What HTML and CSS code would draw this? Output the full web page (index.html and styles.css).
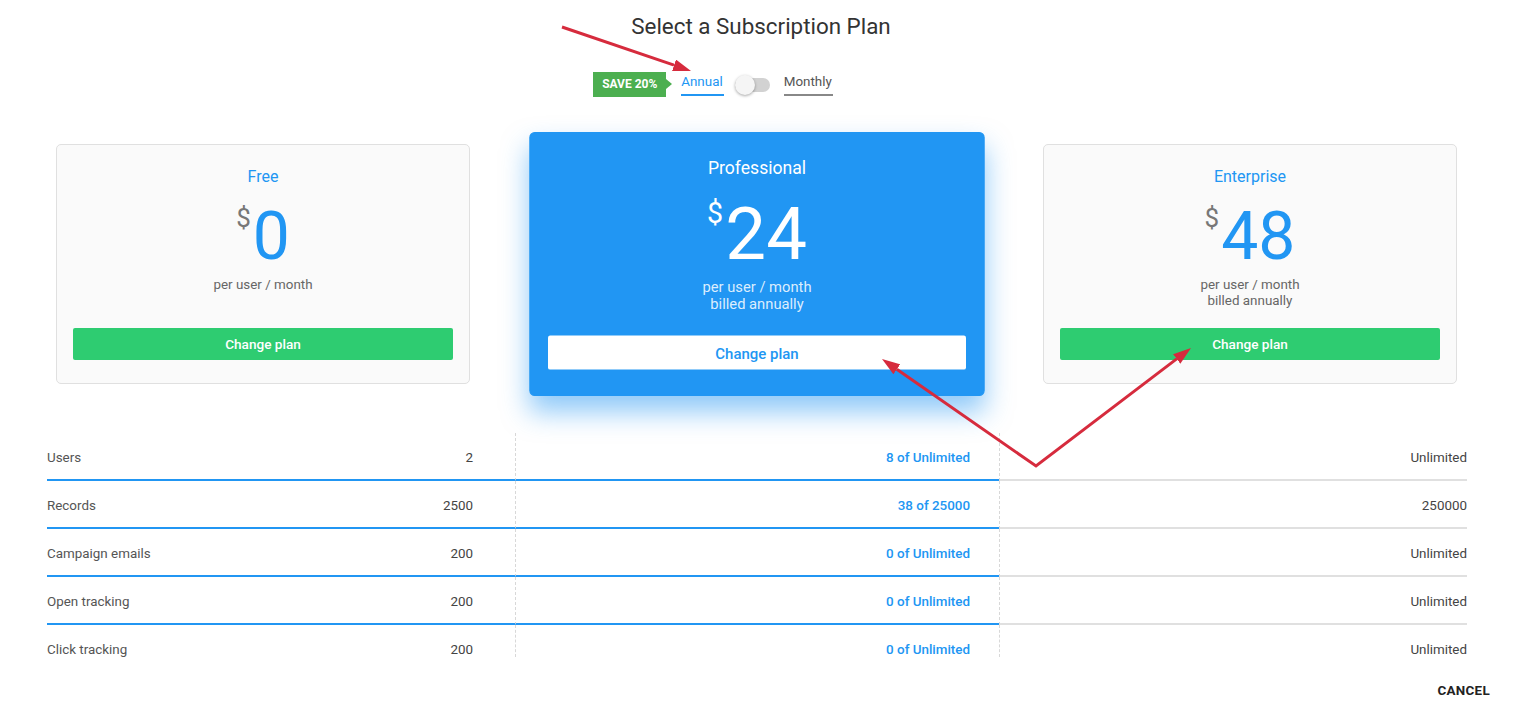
FILE: index.html
```html
<!DOCTYPE html>
<html lang="en">
<head>
<meta charset="utf-8">
<title>Select a Subscription Plan</title>
<link rel="stylesheet" href="styles.css">
</head>
<body>
<div class="page">
  <h1 class="title">Select a Subscription Plan</h1>

  <div class="billing">
    <div class="toggle-group">
      <span class="save-badge">SAVE 20%</span>
      <span class="period-opt active">Annual</span>
      <span class="switch"><span class="knob"></span></span>
      <span class="period-opt">Monthly</span>
    </div>
  </div>

  <div class="plans">
    <div class="card">
      <div class="plan-name">Free</div>
      <div class="price"><span class="cur">$</span><span class="amt">0</span></div>
      <div class="per">per user / month</div>
      <button class="btn">Change plan</button>
    </div>
    <div class="card featured">
      <div class="plan-name">Professional</div>
      <div class="price"><span class="cur">$</span><span class="amt">24</span></div>
      <div class="per">per user / month<br>billed annually</div>
      <button class="btn">Change plan</button>
    </div>
    <div class="card">
      <div class="plan-name">Enterprise</div>
      <div class="price"><span class="cur">$</span><span class="amt">48</span></div>
      <div class="per">per user / month<br>billed annually</div>
      <button class="btn">Change plan</button>
    </div>
  </div>

  <div class="limits">
    <div class="row">
      <div class="cell c1"><span class="label">Users</span><span class="val">2</span></div>
      <div class="cell c2">8 of Unlimited</div>
      <div class="cell c3">Unlimited</div>
    </div>
    <div class="row">
      <div class="cell c1"><span class="label">Records</span><span class="val">2500</span></div>
      <div class="cell c2">38 of 25000</div>
      <div class="cell c3">250000</div>
    </div>
    <div class="row">
      <div class="cell c1"><span class="label">Campaign emails</span><span class="val">200</span></div>
      <div class="cell c2">0 of Unlimited</div>
      <div class="cell c3">Unlimited</div>
    </div>
    <div class="row">
      <div class="cell c1"><span class="label">Open tracking</span><span class="val">200</span></div>
      <div class="cell c2">0 of Unlimited</div>
      <div class="cell c3">Unlimited</div>
    </div>
    <div class="row last">
      <div class="cell c1"><span class="label">Click tracking</span><span class="val">200</span></div>
      <div class="cell c2">0 of Unlimited</div>
      <div class="cell c3">Unlimited</div>
    </div>
  </div>

  <div class="footer">
    <button class="cancel">CANCEL</button>
  </div>

  <svg class="annotations" width="1516" height="708" viewBox="0 0 1516 708" xmlns="http://www.w3.org/2000/svg">
    <defs>
      <marker id="ah" viewBox="0 0 18 12" markerWidth="18" markerHeight="12" refX="0" refY="6" orient="auto-start-reverse" markerUnits="userSpaceOnUse">
        <path d="M0,0 L18,6 L0,12 z" fill="#d62b3d"/>
      </marker>
    </defs>
    <line x1="562" y1="27" x2="674" y2="65.2" stroke="#d62b3d" stroke-width="3" marker-end="url(#ah)"/>
    <polyline points="896.8,369.3 1036,466 1176.7,358.9" fill="none" stroke="#d62b3d" stroke-width="3" stroke-linejoin="miter" marker-start="url(#ah)" marker-end="url(#ah)"/>
  </svg>
</div>
</body>
</html>
```

FILE: styles.css
```css
* { box-sizing: border-box; }

html, body {
  margin: 0;
  padding: 0;
  background: #ffffff;
}

body {
  font-family: Roboto, "Liberation Sans", Arial, sans-serif;
  color: #444;
}

.page {
  position: relative;
  width: 1516px;
  height: 708px;
  overflow: hidden;
}

.title {
  margin: 0;
  padding: 13px 0 0 6px;
  font-size: 22.4px;
  line-height: 26px;
  font-weight: 400;
  color: #333;
  text-align: center;
}

.billing {
  display: flex;
  justify-content: center;
  margin-top: 33px;
  padding-right: 2px;
}

.toggle-group {
  position: relative;
  display: flex;
  align-items: center;
  height: 25px;
}

.save-badge {
  position: absolute;
  right: 100%;
  margin-right: 15px;
  top: 0;
  height: 25px;
  width: 73px;
  background: #4caf50;
  color: #fff;
  font-size: 12px;
  font-weight: 700;
  line-height: 25px;
  text-align: center;
  white-space: nowrap;
}

.save-badge::after {
  content: "";
  position: absolute;
  left: 100%;
  top: 7px;
  border-top: 5.5px solid transparent;
  border-bottom: 5.5px solid transparent;
  border-left: 6px solid #4caf50;
}

.period-opt {
  font-size: 13.4px;
  line-height: 15px;
  padding: 0 1px 5px 0;
  margin-top: 1px;
  color: #555;
  border-bottom: 2px solid #888;
}

.period-opt.active {
  color: #2196f3;
  border-bottom-color: #2196f3;
}

.switch {
  position: relative;
  width: 35px;
  height: 14px;
  margin: 0 14px 0 11px;
  border-radius: 7px;
  background: #d2d2d2;
}

.knob {
  position: absolute;
  left: 0;
  top: -3px;
  width: 20px;
  height: 20px;
  border-radius: 50%;
  background: #f5f5f5;
  box-shadow: 0 1px 3px rgba(0, 0, 0, 0.35);
}

.plans {
  display: flex;
  justify-content: space-between;
  padding: 0 59px 0 56px;
  margin-top: 47px;
}

.card {
  position: relative;
  width: 414px;
  height: 240px;
  display: flex;
  flex-direction: column;
  align-items: stretch;
  padding: 22px 16px 23px;
  background: #fafafa;
  border: 1px solid #e0e0e0;
  border-radius: 5px;
  text-align: center;
}

.plan-name {
  font-size: 16px;
  line-height: 20px;
  color: #2196f3;
}

.price {
  margin-top: 14px;
  font-size: 66px;
  line-height: 72px;
  height: 72px;
  color: #2196f3;
}

.cur {
  display: inline-block;
  vertical-align: top;
  margin-top: 4px;
  margin-right: 2px;
  font-size: 26px;
  line-height: 26px;
  color: #777;
}

.per {
  margin-top: 4px;
  font-size: 13.4px;
  line-height: 16px;
  color: #666;
}

.btn {
  margin-top: auto;
  height: 32px;
  width: 100%;
  border: 0;
  border-radius: 2px;
  background: #2ecc71;
  color: #fff;
  font-family: inherit;
  font-size: 13.6px;
  font-weight: 500;
  cursor: pointer;
}

.card.featured {
  z-index: 1;
  background: #2196f3;
  border-color: #2196f3;
  transform: scale(1.1);
  box-shadow: 0 14px 24px rgba(33, 150, 243, 0.5);
}

.card.featured .plan-name,
.card.featured .price,
.card.featured .cur {
  color: #fff;
}

.card.featured .per {
  color: rgba(255, 255, 255, 0.85);
}

.card.featured .btn {
  background: #fff;
  color: #2196f3;
  height: 31px;
}

.limits {
  margin: 49px 0 0 47px;
  width: 1420px;
}

.row {
  display: grid;
  grid-template-columns: 468px 484px 1fr;
}

.cell {
  font-size: 13.4px;
  line-height: 18px;
  padding: 16px 0 12px;
  border-bottom: 2px solid #2196f3;
  color: #444;
  text-align: right;
}

.row.last .cell {
  border-bottom: 0;
  padding-bottom: 0;
  height: 32px;
}

.c1 {
  display: flex;
  justify-content: space-between;
  padding-right: 42px;
  text-align: left;
}

.label {
  color: #555;
}

.c2 {
  border-left: 1px dashed #d8d8d8;
  padding-right: 29px;
  color: #2196f3;
  font-weight: 500;
}

.c3 {
  border-left: 1px dashed #d8d8d8;
  border-bottom-color: #e0e0e0 !important;
}

.footer {
  display: flex;
  justify-content: flex-end;
  padding-right: 26px;
  margin-top: 26px;
}

.cancel {
  border: 0;
  background: transparent;
  padding: 0;
  font-family: inherit;
  font-size: 13.4px;
  line-height: 16px;
  font-weight: 700;
  letter-spacing: 0.3px;
  color: #222;
}

.annotations {
  position: absolute;
  left: 0;
  top: 0;
  pointer-events: none;
  z-index: 5;
}
```
